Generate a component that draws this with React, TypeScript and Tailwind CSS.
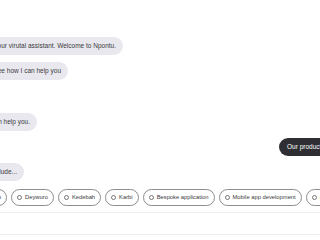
import { ReactNode } from "react";

const chips = ["Npontu", "Deywuro", "Kedebah", "Karbi", "Bespoke application", "Mobile app development", "eCommerce"];

function BotRow({ width, gap, children }: { width: string; gap: string; children: ReactNode }) {
  // justify-end lets the bubble spill past the left edge like the scrolled view
  return (
    <div className={`flex justify-end ${width} ${gap}`}>
      <div className="shrink-0 whitespace-nowrap h-[18px] rounded-full bg-[#e9e8ee] pl-[8px] pr-[7px] flex items-center text-[6.5px] text-[#3b3b40]">
        {children}
      </div>
    </div>
  );
}

function Chip({ label }: { label: string }) {
  return (
    <div className="shrink-0 h-[17px] rounded-full border border-[#8d8d8d] pl-[5px] pr-[5px] flex items-center gap-[3px] whitespace-nowrap text-[5.8px] text-[#3b3b40]">
      <span className="w-[5px] h-[5px] rounded-full border-[0.75px] border-[#777]" />
      {label}
    </div>
  );
}

export default function App() {
  return (
    <div className="w-[320px] h-[240px] overflow-hidden bg-white font-['Liberation_Sans',Arial,sans-serif]">
      <div className="flex flex-col pt-[37px]">
        <BotRow width="w-[123px]" gap="">
          Hello, I am your virutal assistant. Welcome to Npontu.
        </BotRow>
        <BotRow width="w-[68px]" gap="mt-[7px]">
          Let&apos;s see how I can help you
        </BotRow>
        <BotRow width="w-[37px]" gap="mt-[33px]">
          Let me know how I can help you.
        </BotRow>

        {/* user message */}
        <div className="mt-[7px] pl-[279px] flex">
          <div className="shrink-0 whitespace-nowrap h-[18px] rounded-full bg-[#2f2f33] px-[8px] flex items-center text-[6.5px] text-white">
            Our products
          </div>
        </div>

        <BotRow width="w-[24px]" gap="mt-[7px]">
          Our products include...
        </BotRow>

        {/* quick replies */}
        <div className="mt-[8px] flex gap-[4px] h-[17px]">
          <div className="w-[7px] shrink-0 flex justify-end">
            <Chip label={chips[0]} />
          </div>
          {chips.slice(1).map((c) => (
            <Chip key={c} label={c} />
          ))}
        </div>

        <div className="mt-[6px] h-[23px] border-y border-[#ededed]" />
      </div>
    </div>
  );
}
